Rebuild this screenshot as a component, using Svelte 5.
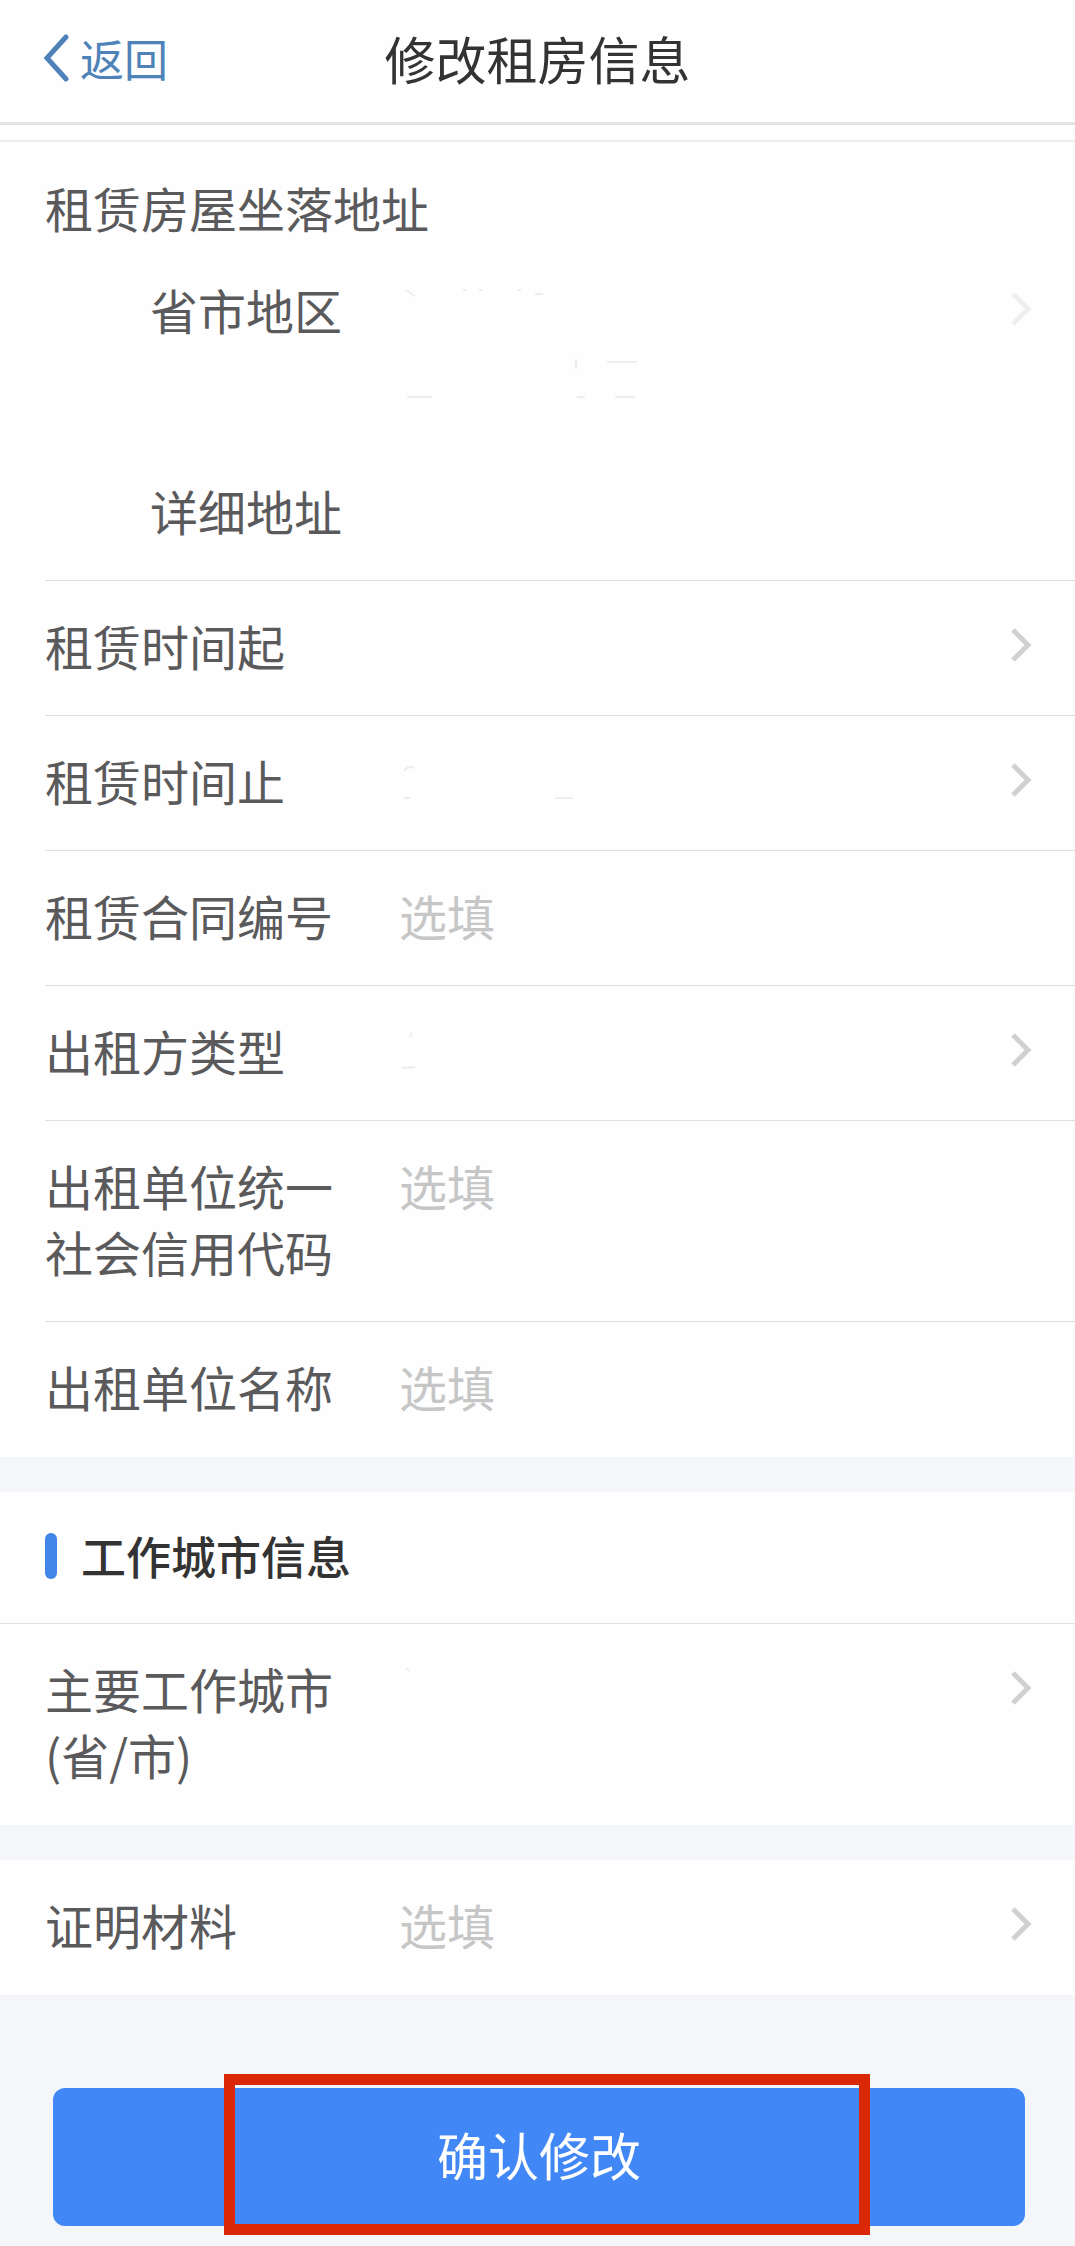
<script lang="ts">
	type Field = {
		id: string;
		label: string;
		kind: "pick" | "text";
		placeholder?: string;
		residue?: string;
		sub?: boolean;
		faint?: boolean;
		tall?: boolean;
	};

	const address: Field[] = [
		{
			id: "region",
			label: "省市地区",
			kind: "pick",
			sub: true,
			faint: true,
			tall: true,
			residue: "M7 14l9 6M64 14h3M80 14h3M119 14h3M136 18h8M177 83v10M208 86h30M8 121h25M178 121h8M216 121h20",
		},
		{ id: "detail", label: "详细地址", kind: "text", sub: true },
	];

	const lease: Field[] = [
		{ id: "start", label: "租赁时间起", kind: "pick" },
		{ id: "end", label: "租赁时间止", kind: "pick", residue: "M5 24q4 -6 10 -3M5 51h6M156 51h18" },
		{ id: "contract", label: "租赁合同编号", kind: "text", placeholder: "选填" },
		{ id: "lessor", label: "出租方类型", kind: "pick", residue: "M13 15l-2 5M3 51l13 -1" },
		{ id: "code", label: "出租单位统一社会信用代码", kind: "text", placeholder: "选填" },
		{ id: "company", label: "出租单位名称", kind: "text", placeholder: "选填" },
	];

	const city: Field[] = [{ id: "city", label: "主要工作城市(省/市)", kind: "pick", residue: "M7 13l4 3" }];
	const proof: Field[] = [{ id: "proof", label: "证明材料", kind: "pick", placeholder: "选填" }];
</script>

{#snippet rows(fields: Field[])}
	{#each fields as f (f.id)}
		<div class="row" class:sub={f.sub} class:tall={f.tall}>
			<label for={f.id}>{f.label}</label>
			{#if f.kind === "text"}
				<input class="value" id={f.id} type="text" placeholder={f.placeholder} />
			{:else}
				<button class="value pick" class:faint={f.faint} id={f.id} type="button">
					{#if f.placeholder}
						<span>{f.placeholder}</span>
					{:else}
						<svg class="residue" viewBox="0 0 260 132" aria-hidden="true"><path d={f.residue} /></svg>
					{/if}
					<svg class="chevron" viewBox="0 0 22 34" aria-hidden="true"><path d="M3 2l15 15L3 32" /></svg>
				</button>
			{/if}
		</div>
	{/each}
{/snippet}

<div class="page">
	<header>
		<a class="back" href="#back">
			<svg viewBox="0 0 26 48" aria-hidden="true"><path d="M23 3L4 24l19 21" /></svg>
			<span>返回</span>
		</a>
		<h1>修改租房信息</h1>
	</header>

	<form>
		<section class="card first">
			<h2 class="group">租赁房屋坐落地址</h2>
			{@render rows(address)}
			{@render rows(lease)}
		</section>

		<section class="card">
			<h2 class="heading">工作城市信息</h2>
			{@render rows(city)}
		</section>

		<section class="card">
			{@render rows(proof)}
		</section>

		<div class="footer">
			<button class="submit" type="button">确认修改<span class="mark"></span></button>
		</div>
	</form>
</div>

<style>
	:global(body) {
		margin: 0;
		background: #f4f6fa;
	}
	.page {
		font-family: "Noto Sans CJK SC", sans-serif;
		font-size: 48px;
		line-height: 66px;
		color: #5a5a5c;
	}
	h1,
	h2 {
		margin: 0;
		font-weight: 400;
	}
	input,
	button {
		font: inherit;
		margin: 0;
		padding: 0;
		border: 0;
		background: none;
		border-radius: 0;
	}
	header {
		display: grid;
		grid-template-columns: 1fr auto 1fr;
		align-items: center;
		padding: 25px 43px 31px;
		background: #fefefe;
		border-bottom: 3px solid #e4e4e4;
	}
	h1 {
		font-size: 51px;
		color: #333;
	}
	.back {
		display: flex;
		align-items: center;
		gap: 11px;
		font-size: 44px;
		color: #4f82b8;
		text-decoration: none;
	}
	.back svg {
		width: 26px;
		height: 48px;
	}
	svg path {
		fill: none;
		stroke: currentColor;
		stroke-width: 5;
	}
	.back path {
		stroke-linecap: round;
	}
	.card {
		background: #fefefe;
		margin-bottom: 35px;
	}
	.first {
		padding-top: 15px;
	}
	.group {
		font-size: 48px;
		padding: 32px 45px 5px;
		border-top: 2px solid #ececec;
	}
	.row {
		display: flex;
		align-items: flex-start;
		gap: 66px;
		margin-left: 45px;
		padding: 31px 43px 37px 0;
		border-bottom: 1px solid #dedede;
	}
	.row label {
		flex: none;
		width: 288px;
	}
	.sub label {
		box-sizing: border-box;
		padding-left: 105px;
		white-space: nowrap;
	}
	.row.tall,
	.row:last-child {
		border-bottom-color: transparent;
	}
	.value {
		flex: 1;
		min-width: 0;
		height: 66px;
		color: #5a5a5c;
		text-align: left;
		outline: 0;
	}
	.value::placeholder {
		color: #c6c6c6;
		opacity: 1;
	}
	.pick {
		display: flex;
		align-items: center;
		justify-content: space-between;
		color: #c6c6c6;
	}
	.tall .value {
		height: 132px;
		align-items: flex-start;
	}
	.tall .chevron {
		margin-top: 16px;
	}
	.residue {
		width: 260px;
		height: 132px;
		align-self: flex-start;
		color: #ededed;
	}
	.residue path {
		stroke-width: 2;
	}
	.chevron {
		flex: none;
		width: 22px;
		height: 34px;
		color: #d0d0d0;
	}
	.faint .chevron {
		color: #efefef;
	}
	.heading {
		display: flex;
		align-items: center;
		gap: 24px;
		padding: 31px 45px 34px;
		border-bottom: 1px solid #e2e2e2;
		font-size: 45px;
		font-weight: 500;
		color: #333;
	}
	.heading::before {
		content: "";
		width: 12px;
		height: 46px;
		border-radius: 6px;
		background: #4285ea;
	}
	.footer {
		padding: 58px 50px 21px 53px;
	}
	.submit {
		position: relative;
		display: block;
		width: 100%;
		height: 138px;
		padding-bottom: 6px;
		border-radius: 12px;
		background: #4187f6;
		color: #fff;
		font-size: 51px;
	}
	/* red frame laid over the button */
	.mark {
		position: absolute;
		inset: -14px 155px -9px 171px;
		border: 11px solid #da2706;
	}
</style>
